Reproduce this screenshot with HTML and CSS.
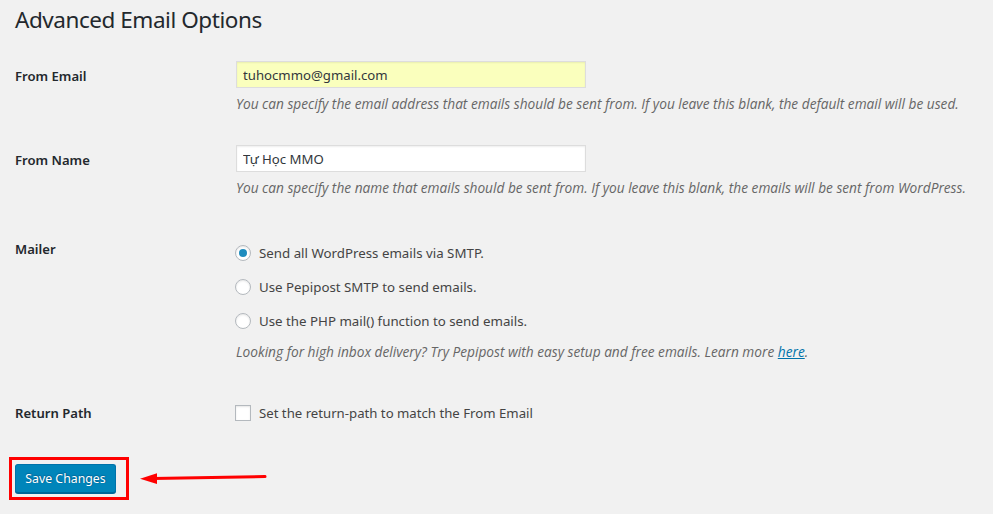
FILE: index.html
```html
<!DOCTYPE html>
<html lang="en">
<head>
<meta charset="utf-8">
<title>Advanced Email Options</title>
<link rel="stylesheet" href="styles.css">
</head>
<body>
<div class="wrap">
  <h2 class="title">Advanced Email Options</h2>
  <div class="form-table">
    <div class="row row-email">
      <div class="th">From Email</div>
      <div class="td">
        <input class="text autofill" type="text" value="tuhocmmo@gmail.com">
        <p class="desc">You can specify the email address that emails should be sent from. If you leave this blank, the default email will be used.</p>
      </div>
    </div>
    <div class="row row-name">
      <div class="th">From Name</div>
      <div class="td">
        <input class="text" type="text" value="Tự Học MMO">
        <p class="desc">You can specify the name that emails should be sent from. If you leave this blank, the emails will be sent from WordPress.</p>
      </div>
    </div>
    <div class="row row-mailer">
      <div class="th th-mailer">Mailer</div>
      <div class="td td-mailer">
        <label class="opt"><span class="radio checked"></span>Send all WordPress emails via SMTP.</label>
        <label class="opt"><span class="radio"></span>Use Pepipost SMTP to send emails.</label>
        <label class="opt"><span class="radio"></span>Use the PHP mail() function to send emails.</label>
        <p class="desc desc-mailer">Looking for high inbox delivery? Try Pepipost with easy setup and free emails. Learn more <a href="#">here</a>.</p>
      </div>
    </div>
    <div class="row row-return">
      <div class="th th-return">Return Path</div>
      <div class="td td-return">
        <label class="chk"><span class="checkbox"></span>Set the return-path to match the From Email</label>
      </div>
    </div>
  </div>
  <div class="submit">
    <div class="highlight">
      <button class="button-primary" type="button">Save Changes</button>
    </div>
    <svg class="arrow" width="130" height="16" viewBox="0 0 130 16" aria-hidden="true">
      <line x1="14" y1="8.6" x2="126" y2="6.6" stroke="#f00" stroke-width="3" stroke-linecap="round"/>
      <polygon points="1,8.8 18,3.2 18,14" fill="#f00"/>
    </svg>
  </div>
</div>
</body>
</html>
```
FILE: styles.css
```css
html, body {
  margin: 0;
  padding: 0;
}
body {
  background: #f1f1f1;
  color: #444;
  font-family: "Noto Sans", "Open Sans", sans-serif;
  font-size: 14px;
  width: 993px;
  height: 514px;
  overflow: hidden;
}
.wrap {
  padding-left: 15px;
}
.title {
  margin: 0;
  padding-top: 5px;
  font-size: 22.5px;
  line-height: 30px;
  font-weight: 400;
  color: #23282d;
  letter-spacing: -0.45px;
}
.form-table {
  margin-top: 11px;
}
.row {
  display: grid;
  grid-template-columns: 221px 1fr;
}
.th {
  padding-top: 21px;
  font-weight: 600;
  font-size: 13.1px;
  line-height: 18px;
  color: #23282d;
}
.td {
  padding-top: 15px;
}
.row-email .td {
  padding-bottom: 17px;
}
.row-name .td {
  padding-bottom: 23px;
}
.text {
  display: block;
  box-sizing: border-box;
  width: 350px;
  height: 27px;
  margin: 0;
  padding: 2px 6px;
  border: 1px solid #ddd;
  box-shadow: inset 0 1px 2px rgba(0,0,0,.07);
  background: #fff;
  color: #32373c;
  font-family: inherit;
  font-size: 13.2px;
  outline: none;
}
.text.autofill {
  background: #faffbd;
}
.desc {
  margin: 6px 0 0;
  font-family: "Open Sans", "Noto Sans", sans-serif;
  font-size: 13.7px;
  line-height: 19px;
  font-style: italic;
  color: #666;
  white-space: nowrap;
}
.th-mailer {
  padding-top: 20px;
}
.td-mailer {
  padding-top: 16px;
  padding-bottom: 23px;
}
.opt {
  display: flex;
  align-items: center;
  height: 34px;
  font-size: 13.3px;
  color: #444;
}
.radio, .checkbox {
  box-sizing: border-box;
  flex: none;
  width: 16px;
  height: 16px;
  border: 1px solid #b4b9be;
  background: #fff;
  box-shadow: inset 0 1px 2px rgba(0,0,0,.1);
  margin-right: 8px;
  margin-left: -1px;
}
.radio {
  border-radius: 50%;
  display: flex;
  align-items: center;
  justify-content: center;
}
.radio.checked::after {
  content: "";
  width: 8px;
  height: 8px;
  border-radius: 50%;
  background: #1e8cbe;
}
.desc-mailer {
  margin-top: 4px;
}
.desc a {
  color: #0073aa;
  text-decoration: underline;
}
.th-return {
  padding-top: 20px;
}
.td-return {
  padding-top: 20px;
}
.chk {
  display: flex;
  align-items: center;
  height: 18px;
  font-size: 13.2px;
  color: #444;
}
.submit {
  margin-top: 35px;
  margin-left: -6px;
  display: flex;
  align-items: center;
}
.highlight {
  border: 3px solid #f00;
  padding: 4px 10px 4px 3px;
  display: flex;
}
.button-primary {
  box-sizing: border-box;
  width: 101px;
  height: 29px;
  padding: 0;
  border: 1px solid #0073aa;
  border-bottom-color: #006799;
  border-radius: 3px;
  background: #0085ba;
  box-shadow: 0 1px 0 #006799;
  color: #fff;
  font-family: inherit;
  font-size: 12.3px;
  text-shadow: 0 -1px 1px #006799, 1px 0 1px #006799;
  cursor: pointer;
}
.arrow {
  display: block;
  margin-left: 10px;
  margin-top: -2px;
}
```
